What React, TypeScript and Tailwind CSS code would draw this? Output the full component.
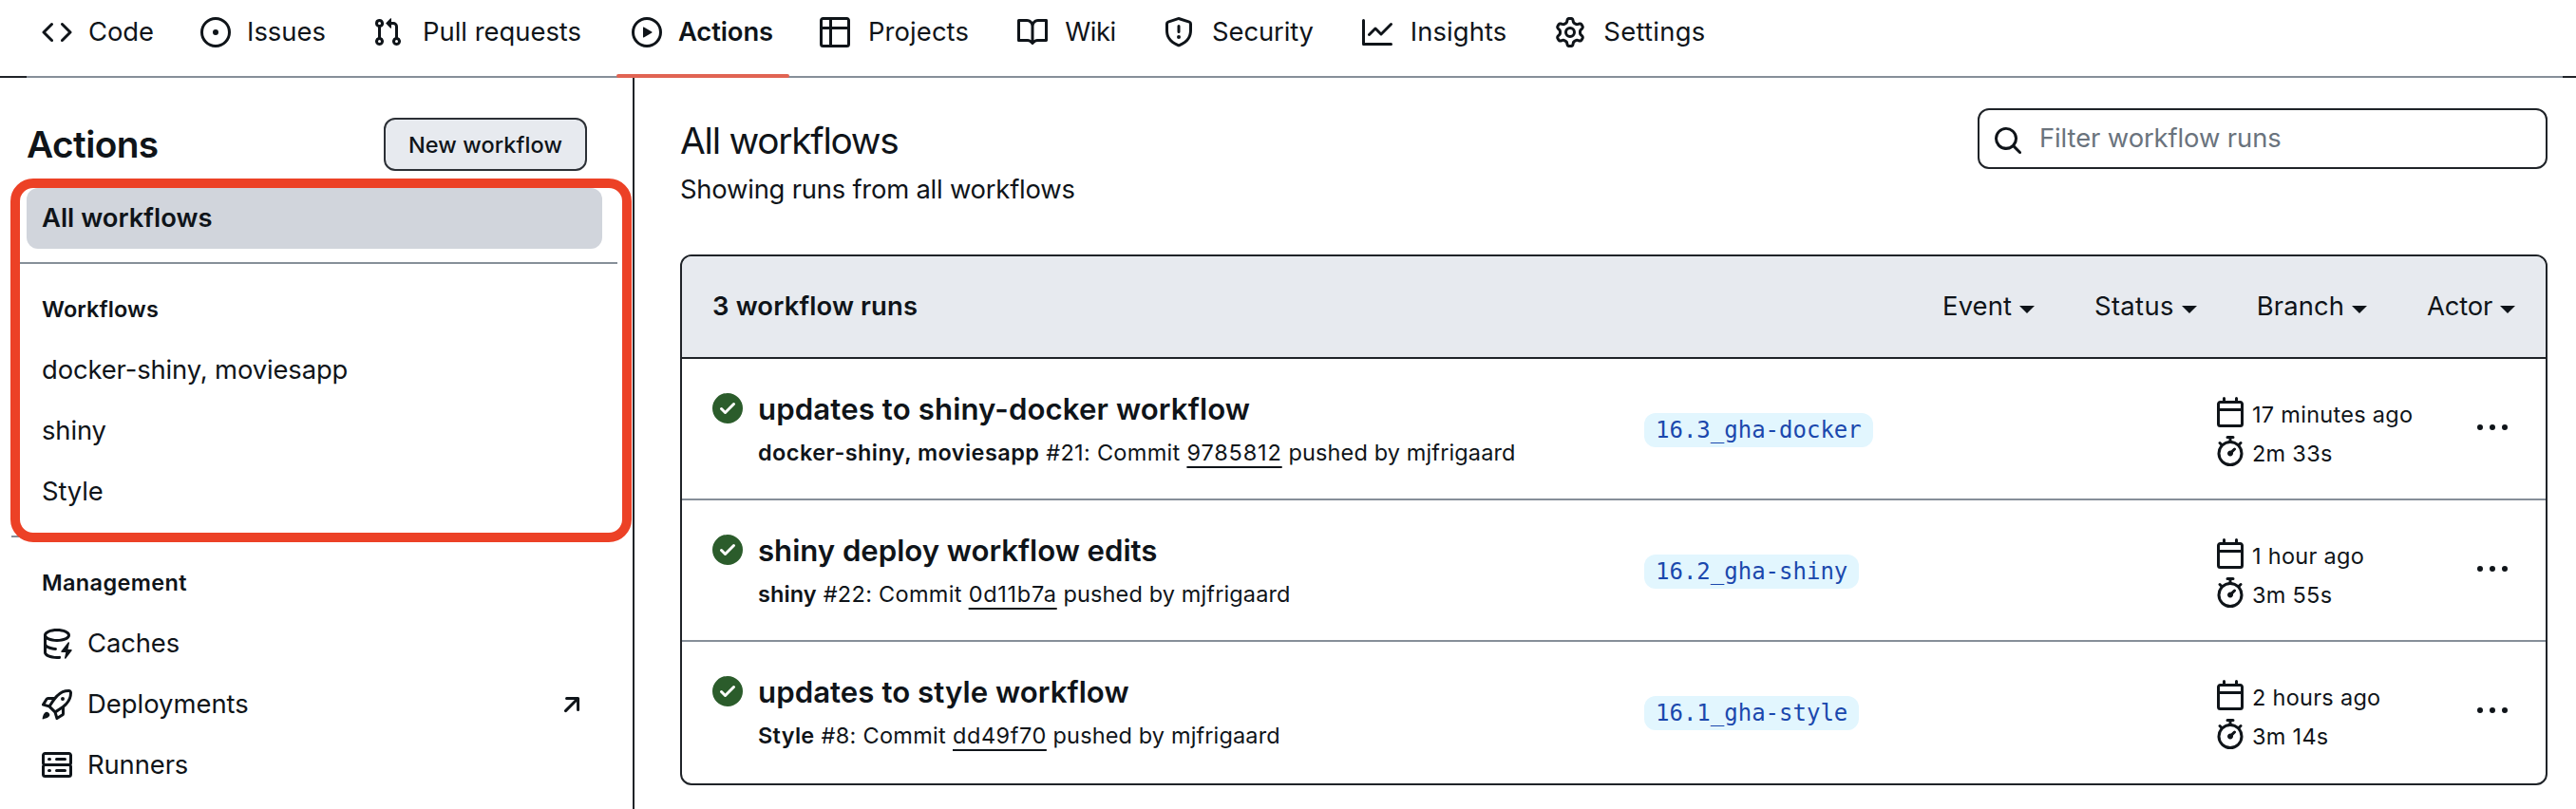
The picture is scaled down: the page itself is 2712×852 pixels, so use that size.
import type { ReactNode } from "react";

const paths = {
  code: "m11.28 3.22 4.25 4.25a.75.75 0 0 1 0 1.06l-4.25 4.25a.749.749 0 0 1-1.275-.326.749.749 0 0 1 .215-.734L13.94 8l-3.72-3.72a.749.749 0 0 1 .326-1.275.749.749 0 0 1 .734.215Zm-6.56 0a.751.751 0 0 1 1.042.018.751.751 0 0 1 .018 1.042L2.06 8l3.72 3.72a.749.749 0 0 1-.326 1.275.749.749 0 0 1-.734-.215L.47 8.53a.75.75 0 0 1 0-1.06Z",
  issue: "M8 9.5a1.5 1.5 0 1 0 0-3 1.5 1.5 0 0 0 0 3ZM8 0a8 8 0 1 1 0 16A8 8 0 0 1 8 0ZM1.5 8a6.5 6.5 0 1 0 13 0 6.5 6.5 0 0 0-13 0Z",
  pull: "M1.5 3.25a2.25 2.25 0 1 1 3 2.122v5.256a2.251 2.251 0 1 1-1.5 0V5.372A2.25 2.25 0 0 1 1.5 3.25Zm5.677-.177L9.573.677A.25.25 0 0 1 10 .854V2.5h1A2.5 2.5 0 0 1 13.5 5v5.628a2.251 2.251 0 1 1-1.5 0V5a1 1 0 0 0-1-1h-1v1.646a.25.25 0 0 1-.427.177L7.177 3.427a.25.25 0 0 1 0-.354ZM3.75 2.5a.75.75 0 1 0 0 1.5.75.75 0 0 0 0-1.5Zm0 9.5a.75.75 0 1 0 0 1.5.75.75 0 0 0 0-1.5Zm8.25.75a.75.75 0 1 0 1.5 0 .75.75 0 0 0-1.5 0Z",
  play: "M8 0a8 8 0 1 1 0 16A8 8 0 0 1 8 0ZM1.5 8a6.5 6.5 0 1 0 13 0 6.5 6.5 0 0 0-13 0Zm4.879-2.773 4.264 2.559a.25.25 0 0 1 0 .428l-4.264 2.559A.25.25 0 0 1 6 10.559V5.442a.25.25 0 0 1 .379-.215Z",
  table: "M0 1.75C0 .784.784 0 1.75 0h12.5C15.216 0 16 .784 16 1.75v12.5A1.75 1.75 0 0 1 14.25 16H1.75A1.75 1.75 0 0 1 0 14.25ZM6.5 6.5v8h7.75a.25.25 0 0 0 .25-.25V6.5Zm8-1.5V1.75a.25.25 0 0 0-.25-.25H6.5V5Zm-13 1.5v7.75c0 .138.112.25.25.25H5v-8ZM5 5V1.5H1.75a.25.25 0 0 0-.25.25V5Z",
  book: "M0 1.75A.75.75 0 0 1 .75 1h4.253c1.227 0 2.317.59 3 1.501A3.743 3.743 0 0 1 11.006 1h4.245a.75.75 0 0 1 .75.75v10.5a.75.75 0 0 1-.75.75h-4.507a2.25 2.25 0 0 0-1.591.659l-.622.621a.75.75 0 0 1-1.06 0l-.622-.621A2.25 2.25 0 0 0 5.258 13H.75a.75.75 0 0 1-.75-.75Zm7.251 10.324.004-5.073-.002-2.253A2.25 2.25 0 0 0 5.003 2.5H1.5v9h3.757a3.75 3.75 0 0 1 1.994.574ZM8.755 4.75l-.004 7.322a3.752 3.752 0 0 1 1.992-.572H14.5v-9h-3.495a2.25 2.25 0 0 0-2.25 2.25Z",
  shield: "M7.467.133a1.748 1.748 0 0 1 1.066 0l5.25 1.68A1.75 1.75 0 0 1 15 3.48V7c0 1.566-.32 3.182-1.303 4.682-.983 1.498-2.585 2.813-5.032 3.855a1.697 1.697 0 0 1-1.33 0c-2.447-1.042-4.049-2.357-5.032-3.855C1.32 10.182 1 8.566 1 7V3.48a1.75 1.75 0 0 1 1.217-1.667Zm.61 1.429a.25.25 0 0 0-.153 0l-5.25 1.68a.25.25 0 0 0-.174.238V7c0 1.358.275 2.666 1.057 3.86.784 1.194 2.121 2.34 4.366 3.297a.196.196 0 0 0 .154 0c2.245-.956 3.582-2.104 4.366-3.298C13.225 9.666 13.5 8.36 13.5 7V3.48a.251.251 0 0 0-.174-.237l-5.25-1.68ZM8.75 4.75v3a.75.75 0 0 1-1.5 0v-3a.75.75 0 0 1 1.5 0ZM9 10.5a1 1 0 1 1-2 0 1 1 0 0 1 2 0Z",
  graph: "M1.5 1.75V13.5h13.75a.75.75 0 0 1 0 1.5H.75a.75.75 0 0 1-.75-.75V1.75a.75.75 0 0 1 1.5 0Zm14.28 2.53-5.25 5.25a.75.75 0 0 1-1.06 0L7 7.06 4.28 9.78a.751.751 0 0 1-1.042-.018.751.751 0 0 1-.018-1.042l3.25-3.25a.75.75 0 0 1 1.06 0L10 7.94l4.72-4.72a.751.751 0 0 1 1.042.018.751.751 0 0 1 .018 1.042Z",
  gear: "M8 0a8.2 8.2 0 0 1 .701.031C9.444.095 9.99.645 10.16 1.29l.288 1.107c.018.066.079.158.212.224.231.114.454.243.668.386.123.082.233.09.299.071l1.103-.303c.644-.176 1.392.021 1.82.63.27.385.506.792.704 1.218.315.675.111 1.422-.364 1.891l-.814.806c-.049.048-.098.147-.088.294.016.257.016.515 0 .772-.01.147.038.246.088.294l.814.806c.475.469.679 1.216.364 1.891a7.977 7.977 0 0 1-.704 1.217c-.428.61-1.176.807-1.82.63l-1.102-.302c-.067-.019-.177-.011-.3.071a5.909 5.909 0 0 1-.668.386c-.133.066-.194.158-.211.224l-.29 1.106c-.168.646-.715 1.196-1.458 1.26a8.006 8.006 0 0 1-1.402 0c-.743-.064-1.289-.614-1.458-1.26l-.289-1.106c-.018-.066-.079-.158-.212-.224a5.738 5.738 0 0 1-.668-.386c-.123-.082-.233-.09-.299-.071l-1.103.303c-.644.176-1.392-.021-1.82-.63a8.12 8.12 0 0 1-.704-1.218c-.315-.675-.111-1.422.363-1.891l.815-.806c.05-.048.098-.147.088-.294a6.214 6.214 0 0 1 0-.772c.01-.147-.038-.246-.088-.294l-.815-.806C.635 6.045.431 5.298.746 4.623a7.92 7.92 0 0 1 .704-1.217c.428-.61 1.176-.807 1.82-.63l1.102.302c.067.019.177.011.3-.071.214-.143.437-.272.668-.386.133-.066.194-.158.211-.224l.29-1.106C6.009.645 6.556.095 7.299.03 7.53.01 7.764 0 8 0Zm-.571 1.525c-.036.003-.108.036-.137.146l-.289 1.105c-.147.561-.549.967-.998 1.189-.173.086-.34.183-.5.29-.417.278-.97.423-1.529.27l-1.103-.303c-.109-.03-.175.016-.195.045-.22.312-.412.644-.573.99-.014.031-.021.11.059.19l.815.806c.411.406.562.957.53 1.456a4.709 4.709 0 0 0 0 .582c.032.499-.119 1.05-.53 1.456l-.815.806c-.081.08-.073.159-.059.19.162.346.353.677.573.989.02.03.085.076.195.046l1.102-.303c.56-.153 1.113-.008 1.53.27.161.107.328.204.501.29.447.222.85.629.997 1.189l.289 1.105c.029.109.101.143.137.146a6.6 6.6 0 0 0 1.142 0c.036-.003.108-.036.137-.146l.289-1.105c.147-.561.549-.967.998-1.189.173-.086.34-.183.5-.29.417-.278.97-.423 1.529-.27l1.103.303c.109.029.175-.016.195-.045.22-.313.411-.644.573-.99.014-.031.021-.11-.059-.19l-.815-.806c-.411-.406-.562-.957-.53-1.456a4.709 4.709 0 0 0 0-.582c-.032-.499.119-1.05.53-1.456l.815-.806c.081-.08.073-.159.059-.19a6.464 6.464 0 0 0-.573-.989c-.02-.03-.085-.076-.195-.046l-1.102.303c-.56.153-1.113.008-1.53-.27a4.44 4.44 0 0 0-.501-.29c-.447-.222-.85-.629-.997-1.189l-.289-1.105c-.029-.11-.101-.143-.137-.146a6.6 6.6 0 0 0-1.142 0ZM11 8a3 3 0 1 1-6 0 3 3 0 0 1 6 0ZM9.5 8a1.5 1.5 0 1 0-3.001.001A1.5 1.5 0 0 0 9.5 8Z",
  cache: "M2.5 5.724V8c0 .248.238.7 1.169 1.159.874.43 2.144.745 3.62.822a.75.75 0 1 1-.078 1.498c-1.622-.085-3.102-.432-4.204-.975a5.565 5.565 0 0 1-.507-.28V12.5c0 .133.058.318.282.551.227.237.591.483 1.101.707 1.015.447 2.47.742 4.117.742.406 0 .802-.018 1.183-.052a.751.751 0 1 1 .134 1.494C8.89 15.98 8.45 16 8 16c-1.805 0-3.475-.32-4.721-.869-.623-.274-1.173-.619-1.579-1.041-.408-.425-.7-.964-.7-1.59v-9c0-.626.292-1.165.7-1.591.406-.42.956-.766 1.579-1.04C4.525.32 6.195 0 8 0c1.806 0 3.476.32 4.721.869.623.274 1.173.619 1.579 1.041.408.425.7.964.7 1.59 0 .626-.292 1.165-.7 1.591-.406.42-.956.766-1.578 1.04C11.475 6.68 9.805 7 8 7c-1.805 0-3.475-.32-4.721-.869a6.15 6.15 0 0 1-.779-.407Zm0-2.224c0 .133.058.318.282.551.227.237.591.483 1.101.707C4.898 5.205 6.353 5.5 8 5.5c1.646 0 3.101-.295 4.118-.742.508-.224.873-.471 1.1-.708.224-.232.282-.417.282-.55 0-.133-.058-.318-.282-.551-.227-.237-.591-.483-1.101-.707C11.102 1.795 9.647 1.5 8 1.5c-1.646 0-3.101.295-4.118.742-.508.224-.873.471-1.1.708-.224.232-.282.417-.282.55ZM14.49 7.582a.375.375 0 0 0-.66-.313l-3.625 4.625a.375.375 0 0 0 .295.606h2.127l-.619 2.922a.375.375 0 0 0 .666.304l3.125-4.125A.375.375 0 0 0 15.5 11h-1.778l.769-3.418Z",
  rocket: "M14.064 0h.186C15.216 0 16 .784 16 1.75v.186a8.752 8.752 0 0 1-2.564 6.186l-.458.459c-.314.314-.641.616-.979.904v3.207c0 .608-.315 1.172-.833 1.49l-2.774 1.707a.749.749 0 0 1-1.11-.418l-.954-3.102a1.214 1.214 0 0 1-.145-.125L3.754 9.816a1.218 1.218 0 0 1-.124-.145L.528 8.717a.749.749 0 0 1-.418-1.11l1.71-2.774A1.748 1.748 0 0 1 3.31 4h3.204c.288-.338.59-.665.904-.979l.459-.458A8.749 8.749 0 0 1 14.064 0ZM8.938 3.623h-.002l-.458.458c-.76.76-1.437 1.598-2.02 2.5l-1.5 2.317 2.143 2.143 2.317-1.5c.902-.583 1.74-1.26 2.499-2.02l.459-.458a7.25 7.25 0 0 0 2.123-5.127V1.75a.25.25 0 0 0-.25-.25h-.186a7.249 7.249 0 0 0-5.125 2.123ZM3.56 14.56c-.732.732-2.334 1.045-3.005 1.148a.234.234 0 0 1-.201-.064.234.234 0 0 1-.064-.201c.103-.671.416-2.273 1.15-3.003a1.502 1.502 0 1 1 2.12 2.12Zm6.94-3.935c-.088.06-.177.118-.266.175l-2.35 1.521.548 1.783 1.949-1.2a.25.25 0 0 0 .119-.213ZM3.678 8.116 5.2 5.766c.058-.09.117-.178.176-.266H3.309a.25.25 0 0 0-.213.119l-1.2 1.95ZM12 5a1 1 0 1 1-2 0 1 1 0 0 1 2 0Z",
  server: "M1.75 1h12.5c.966 0 1.75.784 1.75 1.75v4c0 .372-.116.717-.314 1 .198.283.314.628.314 1v4a1.75 1.75 0 0 1-1.75 1.75H1.75A1.75 1.75 0 0 1 0 12.75v-4c0-.358.109-.707.314-1a1.739 1.739 0 0 1-.314-1v-4C0 1.784.784 1 1.75 1ZM1.5 2.75v4c0 .138.112.25.25.25h12.5a.25.25 0 0 0 .25-.25v-4a.25.25 0 0 0-.25-.25H1.75a.25.25 0 0 0-.25.25Zm.25 5.75a.25.25 0 0 0-.25.25v4c0 .138.112.25.25.25h12.5a.25.25 0 0 0 .25-.25v-4a.25.25 0 0 0-.25-.25ZM7 4.75A.75.75 0 0 1 7.75 4h4.5a.75.75 0 0 1 0 1.5h-4.5A.75.75 0 0 1 7 4.75ZM7.75 10h4.5a.75.75 0 0 1 0 1.5h-4.5a.75.75 0 0 1 0-1.5ZM3 4.75A.75.75 0 0 1 3.75 4h.5a.75.75 0 0 1 0 1.5h-.5A.75.75 0 0 1 3 4.75ZM3.75 10h.5a.75.75 0 0 1 0 1.5h-.5a.75.75 0 0 1 0-1.5Z",
  arrow: "M4.53 4.75A.75.75 0 0 1 5.28 4h6.01a.75.75 0 0 1 .75.75v6.01a.75.75 0 0 1-1.5 0v-4.2l-5.26 5.261a.749.749 0 0 1-1.275-.326.749.749 0 0 1 .215-.734L9.48 5.5h-4.2a.75.75 0 0 1-.75-.75Z",
  search: "M10.68 11.74a6 6 0 0 1-7.922-8.982 6 6 0 0 1 8.982 7.922l3.04 3.04a.749.749 0 0 1-.326 1.275.749.749 0 0 1-.734-.215ZM11.5 7a4.499 4.499 0 1 0-8.997 0A4.499 4.499 0 0 0 11.5 7Z",
  check: "M8 16A8 8 0 1 1 8 0a8 8 0 0 1 0 16Zm3.78-9.72a.751.751 0 0 0-.018-1.042.751.751 0 0 0-1.042-.018L6.75 9.19 5.28 7.72a.751.751 0 0 0-1.042.018.751.751 0 0 0-.018 1.042l2 2a.75.75 0 0 0 1.06 0Z",
  calendar: "M4.75 0a.75.75 0 0 1 .75.75V2h5V.75a.75.75 0 0 1 1.5 0V2h1.25c.966 0 1.75.784 1.75 1.75v10.5A1.75 1.75 0 0 1 13.25 16H2.75A1.75 1.75 0 0 1 1 14.25V3.75C1 2.784 1.784 2 2.75 2H4V.75A.75.75 0 0 1 4.75 0ZM2.5 7.5v6.75c0 .138.112.25.25.25h10.5a.25.25 0 0 0 .25-.25V7.5Zm10.75-4H2.75a.25.25 0 0 0-.25.25V6h11V3.75a.25.25 0 0 0-.25-.25Z",
  stopwatch: "M5.75.75A.75.75 0 0 1 6.5 0h3a.75.75 0 0 1 0 1.5h-.75v1l-.001.041a6.724 6.724 0 0 1 3.464 1.435l.007-.006.75-.75a.749.749 0 0 1 1.275.326.749.749 0 0 1-.215.734l-.75.75-.006.007a6.75 6.75 0 1 1-10.548 0L2.72 5.03l-.75-.75a.751.751 0 0 1 .018-1.042.751.751 0 0 1 1.042-.018l.75.75.007.006A6.72 6.72 0 0 1 7.25 2.541V1.5H6.5a.75.75 0 0 1-.75-.75ZM8 14.5a5.25 5.25 0 1 0-.001-10.501A5.25 5.25 0 0 0 8 14.5Zm.389-6.7 1.33-1.33a.75.75 0 1 1 1.061 1.06L9.45 8.861A1.503 1.503 0 0 1 8 10.75a1.499 1.499 0 1 1 .389-2.95Z",
  kebab: "M1.5 9a1.5 1.5 0 1 0 0-3 1.5 1.5 0 0 0 0 3ZM8 9a1.5 1.5 0 1 0 0-3 1.5 1.5 0 0 0 0 3ZM14.5 9a1.5 1.5 0 1 0 0-3 1.5 1.5 0 0 0 0 3Z",
};

type IconName = keyof typeof paths;

function Icon({ name, className = "" }: { name: IconName; className?: string }) {
  return (
    <svg viewBox="0 0 16 16" fill="currentColor" className={`h-8 w-8 shrink-0 ${className}`} aria-hidden="true">
      <path d={paths[name]} />
    </svg>
  );
}

const tabs: { icon: IconName; label: string; width: string; active?: boolean }[] = [
  { icon: "code", label: "Code", width: "w-[71px]" },
  { icon: "issue", label: "Issues", width: "w-[85px]" },
  { icon: "pull", label: "Pull requests", width: "w-[177px]" },
  { icon: "play", label: "Actions", width: "w-[102px] tracking-[-0.1px]", active: true },
  { icon: "table", label: "Projects", width: "w-[112px] tracking-[0.1px]" },
  { icon: "book", label: "Wiki", width: "w-[58px] tracking-[-0.4px]" },
  { icon: "shield", label: "Security", width: "w-[113px] tracking-[-0.1px]" },
  { icon: "graph", label: "Insights", width: "w-[107px] tracking-[0.1px]" },
  { icon: "gear", label: "Settings", width: "w-[114px] tracking-[0.3px]" },
];

function TopNav() {
  return (
    <header className="flex h-[82px]">
      <div className="w-7 border-b-2 border-[#1f2328]" />
      <nav className="flex flex-1 gap-4 border-b-2 border-[#868f99]">
        {tabs.map((t) => (
          <a key={t.label} className="relative flex h-[68px] items-center gap-4 px-4">
            <Icon name={t.icon} />
            <span className={`text-center whitespace-nowrap ${t.width} ${t.active ? "font-semibold" : ""}`}>{t.label}</span>
            {t.active && <span className="absolute inset-x-0 top-[78px] h-1 rounded-xs bg-[#e16453]" />}
          </a>
        ))}
      </nav>
      <div className="w-3.5 border-b-2 border-[#1f2328]" />
    </header>
  );
}

function SectionTitle({ children }: { children: ReactNode }) {
  return <h3 className="h-20 pt-8 pl-8 text-[23.5px] leading-8 font-semibold">{children}</h3>;
}

function Sidebar() {
  return (
    <aside className="relative w-[668px] shrink-0 border-r-2 border-[#1f2328] pl-3">
      <div className="mt-[42px] flex h-14 items-center justify-between pr-[48px] pl-4">
        <h2 className="pt-px text-[38.8px] leading-none font-semibold tracking-[-0.6px]">Actions</h2>
        <button className="h-14 w-[214px] rounded-xl border-2 border-[#2c3036] bg-[#e7eaef] pt-px text-[23.5px] font-medium tracking-[0.1px]">
          New workflow
        </button>
      </div>
      <div className="mt-[18px] ml-4 flex h-16 w-[606px] items-center rounded-xl bg-[#d1d5dc] pl-4 font-semibold">All workflows</div>
      <hr className="mt-3.5 w-[638px] border-t-2 border-[#868f99]" />
      <SectionTitle><span className="tracking-[0.1px]">Workflows</span></SectionTitle>
      <ul>
        {["docker-shiny, moviesapp", "shiny", "Style"].map((w) => (
          <li key={w} className="flex h-16 items-center pl-8 tracking-[-0.13px]">{w}</li>
        ))}
      </ul>
      <hr className="mt-3.5 w-[638px] border-t-2 border-[#868f99]" />
      <SectionTitle><span className="tracking-[0.35px]">Management</span></SectionTitle>
      <ul>
        <li className="flex h-16 items-center gap-4 pl-8 tracking-[-0.1px]"><Icon name="cache" />Caches</li>
        <li className="flex h-16 items-center gap-4 pr-[48px] pl-8">
          <Icon name="rocket" />
          <span className="flex-1">Deployments</span>
          <Icon name="arrow" />
        </li>
        <li className="flex h-16 items-center gap-4 pl-8 tracking-[-0.1px]"><Icon name="server" />Runners</li>
      </ul>
      <div className="absolute top-[106px] left-[11px] h-[383px] w-[654px] rounded-3xl border-10 border-[#ec4126]" />
    </aside>
  );
}

const filters = [
  { label: "Event", tracking: "tracking-[0.1px]" },
  { label: "Status", tracking: "tracking-[0.35px]" },
  { label: "Branch", tracking: "tracking-[0.1px]" },
  { label: "Actor", tracking: "tracking-[-0.2px]" },
];

const runs = [
  { title: "updates to shiny-docker workflow", titleTracking: "tracking-[0.1px]", workflow: "docker-shiny, moviesapp", nameTracking: "tracking-[0.42px]", num: "#21", sha: "9785812", shaTracking: "tracking-[0.85px]", branch: "16.3_gha-docker", when: "17 minutes ago", took: "2m 33s" },
  { title: "shiny deploy workflow edits", titleTracking: "tracking-[-0.04px]", workflow: "shiny", nameTracking: "tracking-[0.1px]", num: "#22", sha: "0d11b7a", shaTracking: "tracking-[0.7px]", branch: "16.2_gha-shiny", when: "1 hour ago", took: "3m 55s" },
  { title: "updates to style workflow", titleTracking: "tracking-[0.04px]", workflow: "Style", nameTracking: "tracking-[0.3px]", num: "#8", sha: "dd49f70", shaTracking: "tracking-[0.55px]", branch: "16.1_gha-style", when: "2 hours ago", took: "3m 14s" },
];

function RunRow({ run }: { run: (typeof runs)[number] }) {
  return (
    <li className="flex h-[149px] items-start border-b-2 border-[#868f99] pl-8 last:border-b-0">
      <Icon name="check" className="mt-9 text-[#2b5c2b]" />
      <div className="ml-4 w-[933px] whitespace-nowrap">
        <h4 className={`mt-[33px] text-[31.2px] leading-10 font-semibold ${run.titleTracking}`}>{run.title}</h4>
        <p className="mt-2.5 text-[23.5px] leading-8 tracking-[0.3px]">
          <b className={`font-semibold ${run.nameTracking}`}>{run.workflow}</b> {run.num}: Commit{" "}
          <span className={`underline decoration-2 underline-offset-[6px] ${run.shaTracking}`}>{run.sha}</span>
          <span className="tracking-[0.13px]"> pushed by mjfrigaard</span>
        </p>
      </div>
      <div className="w-[601px] pt-[57px]">
        <div className="flex h-9 w-fit items-center rounded-xl bg-[#e2f6fe] px-3 font-['DejaVu_Sans_Mono',monospace] text-[24px] leading-9 text-[#1b48ad]">
          {run.branch}
        </div>
      </div>
      <div className="w-[276px] pt-[40px] text-[23.5px] tracking-[0.28px]">
        <div className="flex h-[41px] items-start gap-[7px] leading-[38px]"><Icon name="calendar" />{run.when}</div>
        <div className="flex h-8 items-start gap-[7px] leading-[38px]"><Icon name="stopwatch" />{run.took}</div>
      </div>
      <Icon name="kebab" className="mt-[57px]" />
    </li>
  );
}

function Main() {
  return (
    <main className="flex-1 pt-8 pr-[30px] pl-12">
      <div className="flex h-[154px] items-start justify-between">
        <div>
          <h1 className="mt-2 text-[38.8px] leading-[52px] tracking-[-1.25px]">All workflows</h1>
          <p className="mt-[5px] leading-10 tracking-[-0.22px]">Showing runs from all workflows</p>
        </div>
        <div className="flex h-16 w-[600px] items-center rounded-xl border-2 border-[#1f2328] pl-3.5 text-[#6a737d]">
          <Icon name="search" className="mt-1 text-[#0f1419]" />
          <span className="ml-[17px] tracking-[-0.1px]">Filter workflow runs</span>
        </div>
      </div>
      <section className="overflow-hidden rounded-xl border-2 border-[#1f2328]">
        <div className="flex h-[108px] items-center justify-between border-b-2 border-[#1f2328] bg-[#e7eaef] pr-8 pl-8">
          <h3 className="font-semibold tracking-[0.15px]">3 workflow runs</h3>
          <div className="flex gap-[63px]">
            {filters.map((f) => (
              <span key={f.label} className={`flex items-center gap-2 ${f.tracking}`}>
                {f.label}
                <svg viewBox="0 0 16 8" className="mt-[7px] h-2 w-4" fill="currentColor"><path d="M0 0h16L8 8Z" /></svg>
              </span>
            ))}
          </div>
        </div>
        <ul>{runs.map((r) => <RunRow key={r.sha} run={r} />)}</ul>
      </section>
    </main>
  );
}

export default function App() {
  return (
    <div className="flex h-[852px] w-[2712px] flex-col overflow-hidden bg-white font-['Inter',sans-serif] text-[27.4px] text-[#0f1419]">
      <TopNav />
      <div className="flex flex-1">
        <Sidebar />
        <Main />
      </div>
    </div>
  );
}
